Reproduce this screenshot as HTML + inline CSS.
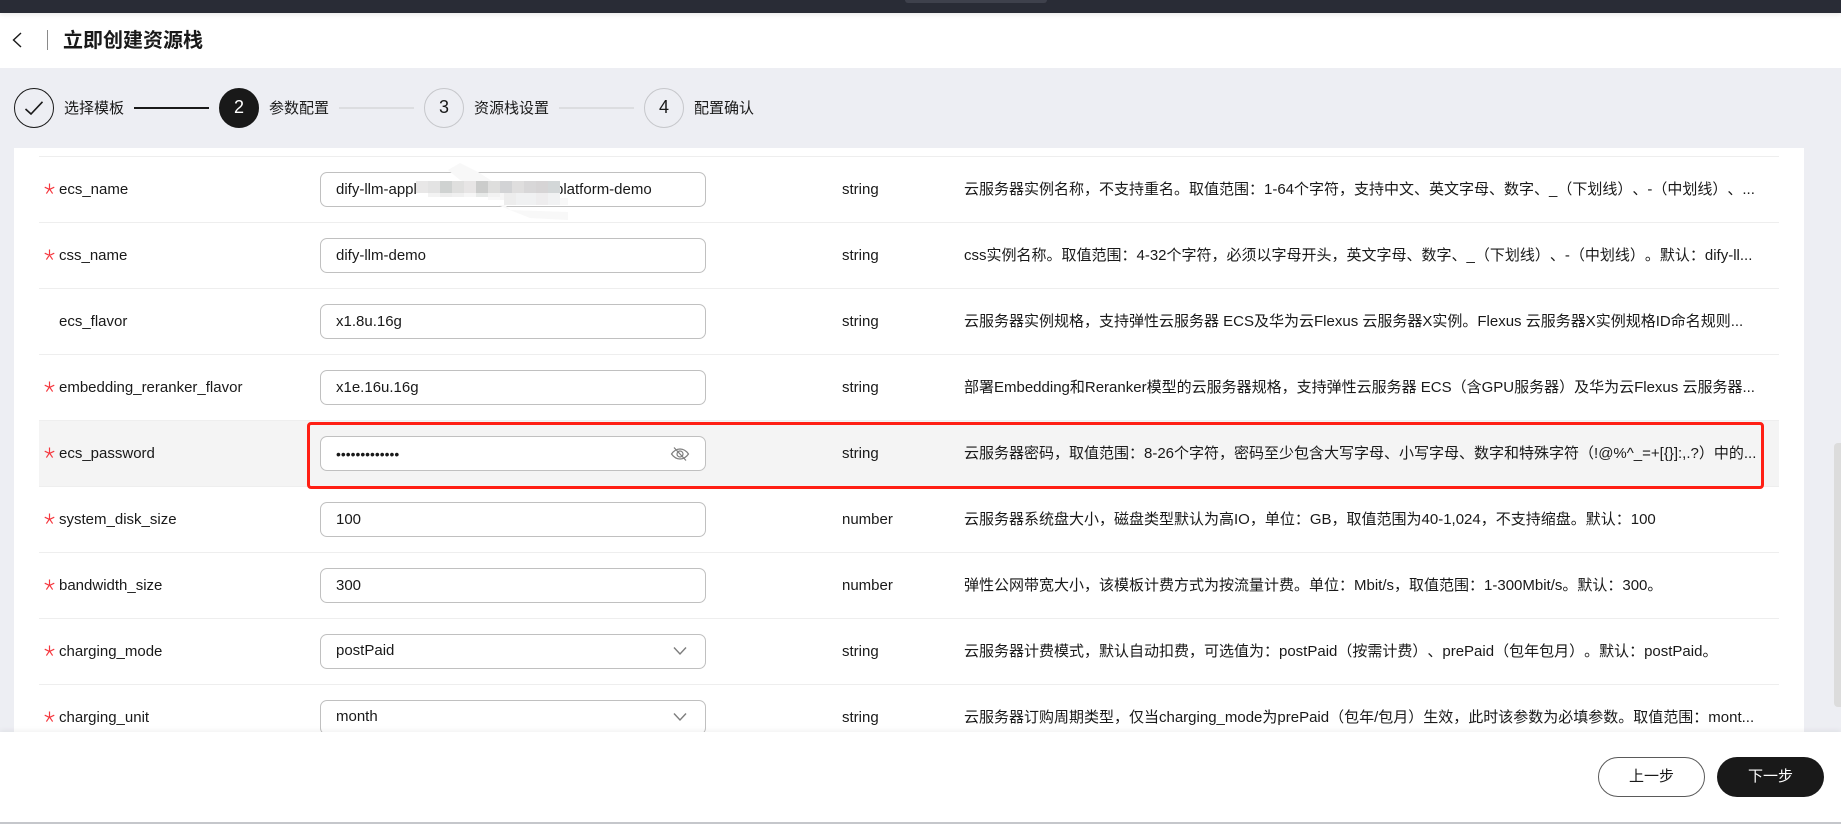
<!DOCTYPE html>
<html lang="zh"><head><meta charset="utf-8"><title>立即创建资源栈</title>
<style>
*{box-sizing:border-box}
html,body{margin:0;padding:0;width:1841px;height:824px;overflow:hidden;background:#edeef3}
body{position:relative;font-family:"Liberation Sans","Noto Sans CJK SC",sans-serif;font-size:15px;color:#191919;text-spacing-trim:space-all}
.a{position:absolute;white-space:nowrap}
#top{left:0;top:0;width:1841px;height:13px;background:#292c36;box-shadow:0 2px 4px rgba(0,0,0,.08);z-index:3}
#pill{left:905px;top:0;width:142px;height:3px;background:#3e414c;border-radius:0 0 8px 8px}
#head{left:0;top:13px;width:1841px;height:55px;background:#fff}
#title{left:63px;top:27px;font-size:20px;line-height:28px;font-weight:700;color:#191919}
#div{left:47px;top:30px;width:1px;height:20px;background:#8a8a8a}
.c{width:40px;height:40px;border-radius:50%;border:1px solid #c6c7cb;top:88px;text-align:center;font-size:18px;line-height:37px;color:#191919}
.sl{top:98px;font-size:15px;line-height:22px;color:#191919}
.ln{top:107px;height:2px;background:#dcdde0}
#card{left:14px;top:148px;width:1790px;height:600px;background:#fff}
.h{left:39px;width:1740px;height:1px;background:#eeeeee}
#hover{left:39px;top:420px;width:1740px;height:66px;background:#f4f4f4}
.st{left:44px;width:11px;height:11px}
.lb{left:59px;line-height:22px;margin-top:1px}
.in{left:320px;width:386px;height:35px;background:#fff;border:1px solid #c0c0c0;border-radius:7px}
.v{left:336px;line-height:22px}
.ty{left:842px;line-height:22px;margin-top:1px}
.de{left:964px;line-height:22px;margin-top:1px}
#red{left:307px;top:422px;width:1457px;height:67px;border:3px solid #ff1f14;border-radius:4px;z-index:2}
#foot{left:0;top:732px;width:1841px;height:92px;background:#fff;box-shadow:0 -2px 5px rgba(0,0,0,.05);z-index:4}
#fl{left:0;top:90px;width:1841px;height:2px;background:#c5c7cb}
.b{top:25px;width:107px;height:40px;border-radius:20px;text-align:center;line-height:38px;font-size:15px}
#sb{left:1834px;top:443px;width:7px;height:264px;background:#dcdcdc;border-radius:4px 0 0 4px}
</style></head><body>
<svg width="0" height="0" style="position:absolute"><defs><symbol id="s" viewBox="0 0 12 12"><path d="M6 .5V7M6 7 .8 4.600M6 7l5.200-2.400M6 6.500 2.600 11.500M6 6.500l3.400 5" fill="none" stroke="#f5383f" stroke-width="1.300"/></symbol></defs></svg>
<div class="a" id="top"><div class="a" id="pill"></div></div>
<div class="a" id="head"></div>
<svg class="a" style="left:10px;top:31px" width="14" height="18" viewBox="0 0 14 18"><path d="M11 2 3.500 9 11 16" fill="none" stroke="#191919" stroke-width="1.400"/></svg>
<div class="a" id="div"></div>
<div class="a" id="title">立即创建资源栈</div>

<div class="a c" style="left:14px;border-color:#191919"></div>
<svg class="a" style="left:14px;top:88px" width="40" height="40" viewBox="0 0 40 40"><path d="M11.500 21 17 26 28.500 13.800" fill="none" stroke="#191919" stroke-width="1.600"/></svg>
<div class="a sl" style="left:64px">选择模板</div>
<div class="a ln" style="left:134px;width:75px;background:#191919"></div>
<div class="a c" style="left:219px;background:#191919;border-color:#191919;color:#fff">2</div>
<div class="a sl" style="left:269px">参数配置</div>
<div class="a ln" style="left:339px;width:75px"></div>
<div class="a c" style="left:424px">3</div>
<div class="a sl" style="left:474px">资源栈设置</div>
<div class="a ln" style="left:559px;width:75px"></div>
<div class="a c" style="left:644px">4</div>
<div class="a sl" style="left:694px">配置确认</div>

<div class="a" id="card"></div>
<div class="a" id="hover"></div>
<div class="a h" style="top:156px"></div>
<div class="a h" style="top:222px"></div>
<div class="a h" style="top:288px"></div>
<div class="a h" style="top:354px"></div>
<div class="a h" style="top:420px"></div>
<div class="a h" style="top:486px"></div>
<div class="a h" style="top:552px"></div>
<div class="a h" style="top:618px"></div>
<div class="a h" style="top:684px"></div>

<svg class="a st" style="top:183px"><use href="#s"/></svg><div class="a lb" style="top:178px">ecs_name</div>
<div class="a in" style="top:172px"></div><div class="a v" style="top:179px">dify-llm-appl</div><div class="a v" style="top:179px;left:555px">platform-demo</div>
<div class="a ty" style="top:178px">string</div>
<div class="a de" style="top:178px">云服务器实例名称，不支持重名。取值范围：1-64个字符，支持中文、英文字母、数字、_（下划线）、-（中划线）、...</div>
<svg class="a" style="left:400px;top:160px" width="180" height="60" viewBox="0 0 180 60">
<path d="M48 10 60 3 78 12 92 21 100 40 110 50 168 52 168 60 130 58 100 46 84 30 60 20Z" fill="#f8f8f8"/>
<rect x="16" y="21" width="144" height="24" fill="#fff"/>
<rect x="16" y="21" width="12" height="12" fill="#e8e7e7"/><rect x="28" y="21" width="12" height="12" fill="#e3e3e3"/><rect x="40" y="21" width="12" height="12" fill="#cfd2d1"/><rect x="52" y="21" width="12" height="12" fill="#dfdfde"/><rect x="64" y="21" width="12" height="12" fill="#e7e5e5"/><rect x="76" y="21" width="12" height="12" fill="#cbcccb"/><rect x="88" y="21" width="12" height="12" fill="#dededd"/><rect x="100" y="21" width="12" height="12" fill="#d2d3d5"/><rect x="112" y="21" width="12" height="12" fill="#dfdede"/><rect x="124" y="21" width="12" height="12" fill="#d8d7d8"/><rect x="136" y="21" width="12" height="12" fill="#d6d4d5"/><rect x="148" y="21" width="12" height="12" fill="#d3d7d8"/>
<rect x="28" y="33" width="12" height="4" fill="#f3f3f3"/><rect x="40" y="33" width="12" height="4" fill="#ededed"/><rect x="52" y="33" width="12" height="4" fill="#f0f0f0"/><rect x="64" y="33" width="12" height="4" fill="#f6f6f6"/><rect x="76" y="33" width="12" height="4" fill="#e7e9e8"/><rect x="88" y="33" width="12" height="4" fill="#f2f2f2"/>
<rect x="88" y="37" width="12" height="3" fill="#f8f8f8"/><rect x="100" y="33" width="12" height="7" fill="#f6f6f6"/><rect x="104" y="33" width="12" height="12" fill="#ededed"/><rect x="116" y="33" width="32" height="12" fill="#f0f1f2"/><rect x="136" y="33" width="12" height="12" fill="#eeedee"/><rect x="148" y="33" width="12" height="12" fill="#f1f2f3"/>
<rect x="160" y="38" width="8" height="7" fill="#f8f8f8"/>
</svg>

<svg class="a st" style="top:249px"><use href="#s"/></svg><div class="a lb" style="top:244px">css_name</div>
<div class="a in" style="top:238px"></div><div class="a v" style="top:245px">dify-llm-demo</div>
<div class="a ty" style="top:244px">string</div>
<div class="a de" style="top:244px">css实例名称。取值范围：4-32个字符，必须以字母开头，英文字母、数字、_（下划线）、-（中划线）。默认：dify-ll...</div>

<div class="a lb" style="top:310px">ecs_flavor</div>
<div class="a in" style="top:304px"></div><div class="a v" style="top:311px">x1.8u.16g</div>
<div class="a ty" style="top:310px">string</div>
<div class="a de" style="top:310px">云服务器实例规格，支持弹性云服务器 ECS及华为云Flexus 云服务器X实例。Flexus 云服务器X实例规格ID命名规则...</div>

<svg class="a st" style="top:381px"><use href="#s"/></svg><div class="a lb" style="top:376px">embedding_reranker_flavor</div>
<div class="a in" style="top:370px"></div><div class="a v" style="top:377px">x1e.16u.16g</div>
<div class="a ty" style="top:376px">string</div>
<div class="a de" style="top:376px">部署Embedding和Reranker模型的云服务器规格，支持弹性云服务器 ECS（含GPU服务器）及华为云Flexus 云服务器...</div>

<svg class="a st" style="top:447px"><use href="#s"/></svg><div class="a lb" style="top:442px">ecs_password</div>
<div class="a in" style="top:436px"></div><div class="a v" style="top:443px;font-size:13.900px">•••••••••••••</div>
<svg class="a" style="left:670px;top:445px" width="20" height="18" viewBox="0 0 20 18"><g fill="none" stroke="#7d7d7d" stroke-width="1.200"><path d="M1.500 9C4 5.500 7 4 10 4s6 1.500 8.500 5c-2.500 3.500-5.500 5-8.500 5S4 12.500 1.500 9Z"/><circle cx="10" cy="9" r="3"/><path d="M4 2.500 16 15.500"/></g></svg>
<div class="a ty" style="top:442px">string</div>
<div class="a de" style="top:442px">云服务器密码，取值范围：8-26个字符，密码至少包含大写字母、小写字母、数字和特殊字符（!@%^_=+[{}]:,.?）中的...</div>

<svg class="a st" style="top:513px"><use href="#s"/></svg><div class="a lb" style="top:508px">system_disk_size</div>
<div class="a in" style="top:502px"></div><div class="a v" style="top:509px">100</div>
<div class="a ty" style="top:508px">number</div>
<div class="a de" style="top:508px">云服务器系统盘大小，磁盘类型默认为高IO，单位：GB，取值范围为40-1,024，不支持缩盘。默认：100</div>

<svg class="a st" style="top:579px"><use href="#s"/></svg><div class="a lb" style="top:574px">bandwidth_size</div>
<div class="a in" style="top:568px"></div><div class="a v" style="top:575px">300</div>
<div class="a ty" style="top:574px">number</div>
<div class="a de" style="top:574px">弹性公网带宽大小，该模板计费方式为按流量计费。单位：Mbit/s，取值范围：1-300Mbit/s。默认：300。</div>

<svg class="a st" style="top:645px"><use href="#s"/></svg><div class="a lb" style="top:640px">charging_mode</div>
<div class="a in" style="top:634px"></div><div class="a v" style="top:640px">postPaid</div>
<svg class="a" style="left:672px;top:645px" width="16" height="12" viewBox="0 0 16 12"><path d="M2 2.500 8 9 14 2.500" fill="none" stroke="#7d7d7d" stroke-width="1.400"/></svg>
<div class="a ty" style="top:640px">string</div>
<div class="a de" style="top:640px">云服务器计费模式，默认自动扣费，可选值为：postPaid（按需计费）、prePaid（包年包月）。默认：postPaid。</div>

<svg class="a st" style="top:711px"><use href="#s"/></svg><div class="a lb" style="top:706px">charging_unit</div>
<div class="a in" style="top:700px"></div><div class="a v" style="top:706px">month</div>
<svg class="a" style="left:672px;top:711px" width="16" height="12" viewBox="0 0 16 12"><path d="M2 2.500 8 9 14 2.500" fill="none" stroke="#7d7d7d" stroke-width="1.400"/></svg>
<div class="a ty" style="top:706px">string</div>
<div class="a de" style="top:706px">云服务器订购周期类型，仅当charging_mode为prePaid（包年/包月）生效，此时该参数为必填参数。取值范围：mont...</div>

<div class="a" id="red"></div>
<div class="a" id="sb"></div>
<div class="a" id="foot">
<div class="a b" style="left:1598px;background:#fff;border:1px solid #5a5a5a;color:#191919">上一步</div>
<div class="a b" style="left:1717px;background:#191919;color:#fff;line-height:40px">下一步</div>
<div class="a" id="fl"></div>
</div>
</body></html>
